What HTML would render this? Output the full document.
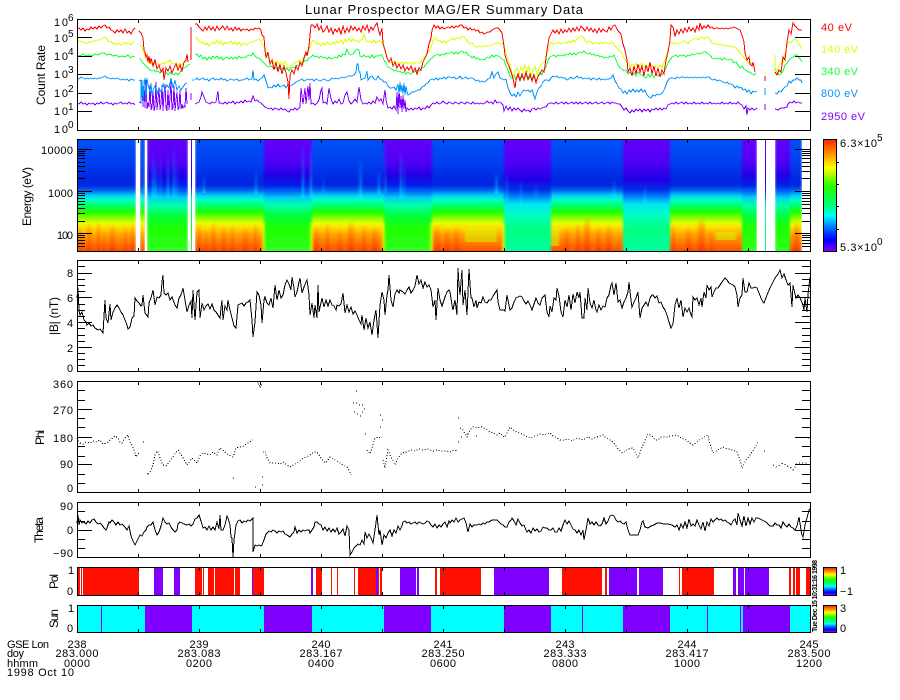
<!DOCTYPE html>
<html><head><meta charset="utf-8"><title>Lunar Prospector MAG/ER Summary Data</title>
<style>
html,body{margin:0;padding:0;background:#fff;width:900px;height:700px;overflow:hidden}
svg{display:block}
text{font-family:"Liberation Sans",sans-serif;fill:#000}
.c{shape-rendering:crispEdges;fill:none}
</style></head><body>
<svg width="900" height="700" viewBox="0 0 900 700" xmlns="http://www.w3.org/2000/svg">
<defs>
<filter id="bx" filterUnits="userSpaceOnUse" x="0" y="0" width="900" height="700" color-interpolation-filters="sRGB"><feGaussianBlur stdDeviation="1.1 0"/></filter>
<linearGradient id="d" gradientUnits="userSpaceOnUse" x1="0" y1="140" x2="0" y2="251">
<stop offset="0" stop-color="#0050f8"/><stop offset=".2" stop-color="#0040ee"/><stop offset=".34" stop-color="#0028e6"/><stop offset=".41" stop-color="#0028e0"/><stop offset=".46" stop-color="#0070f0"/><stop offset=".5" stop-color="#00d0f8"/><stop offset=".54" stop-color="#00ffc8"/><stop offset=".6" stop-color="#00ff5a"/><stop offset=".65" stop-color="#20ff00"/><stop offset=".7" stop-color="#80ff00"/><stop offset=".75" stop-color="#e6ff00"/><stop offset=".79" stop-color="#ffdc00"/><stop offset=".86" stop-color="#ffa000"/><stop offset="1" stop-color="#ff5000"/></linearGradient>
<linearGradient id="n" gradientUnits="userSpaceOnUse" x1="0" y1="140" x2="0" y2="251">
<stop offset="0" stop-color="#6400fa"/><stop offset=".2" stop-color="#5000f5"/><stop offset=".32" stop-color="#2000e4"/><stop offset=".41" stop-color="#0020e8"/><stop offset=".47" stop-color="#0070fa"/><stop offset=".52" stop-color="#00d0f0"/><stop offset=".59" stop-color="#00ffaa"/><stop offset=".68" stop-color="#00ff3c"/><stop offset=".8" stop-color="#1eff00"/><stop offset="1" stop-color="#30ff20"/></linearGradient>
<linearGradient id="m" gradientUnits="userSpaceOnUse" x1="0" y1="140" x2="0" y2="251">
<stop offset="0" stop-color="#6400fa"/><stop offset=".2" stop-color="#5000f5"/><stop offset=".36" stop-color="#2000e4"/><stop offset=".45" stop-color="#0030e8"/><stop offset=".52" stop-color="#0090fa"/><stop offset=".58" stop-color="#00e8f0"/><stop offset=".68" stop-color="#00ffc0"/><stop offset=".8" stop-color="#00ff80"/><stop offset="1" stop-color="#00ffa0"/></linearGradient>
<linearGradient id="r" x1="0" y1="0" x2="0" y2="1">
<stop offset="0" stop-color="#ff2800"/><stop offset=".13" stop-color="#ff9600"/><stop offset=".25" stop-color="#ffff00"/><stop offset=".42" stop-color="#1eff00"/><stop offset=".6" stop-color="#00ff82"/><stop offset=".68" stop-color="#00ffff"/><stop offset=".82" stop-color="#0050ff"/><stop offset=".9" stop-color="#0000ff"/><stop offset="1" stop-color="#8000ff"/></linearGradient>
<linearGradient id="s" x1="0" y1="0" x2="0" y2="1"><stop offset="0" stop-color="#00ffff" stop-opacity="0"/><stop offset=".55" stop-color="#00b0ff" stop-opacity=".45"/><stop offset="1" stop-color="#00ffff" stop-opacity=".8"/></linearGradient>
<linearGradient id="f" x1="0" y1="0" x2="0" y2="1"><stop offset="0" stop-color="#ff8000" stop-opacity="0"/><stop offset=".35" stop-color="#ff7000" stop-opacity=".5"/><stop offset="1" stop-color="#ff2000" stop-opacity=".55"/></linearGradient>
<path id="xt" d="M138.5 0v3M199.5 0v3M260.5 0v3M321.5 0v3M382.5 0v3M443.5 0v3M504.5 0v3M565.5 0v3M626.5 0v3M687.5 0v3M748.5 0v3"/>
<path id="xb" d="M138.5 0v-3M199.5 0v-3M260.5 0v-3M321.5 0v-3M382.5 0v-3M443.5 0v-3M504.5 0v-3M565.5 0v-3M626.5 0v-3M687.5 0v-3M748.5 0v-3"/>
</defs>

<text x="305" y="14" font-size="13" textLength="278" lengthAdjust="spacing">Lunar Prospector MAG/ER Summary Data</text>

<!-- panel 1 curves -->
<g class="c" stroke-width="1">
<path stroke="#8000ff" d="M77 103 79 104 81 102 83 104 85 103 87 105 89 103 91 104 93 103 95 105 97 103 99 104 101 102 103 104 105 103 107 102 109 104 111 103 113 105 115 103 117 104 119 103 121 102 123 104 125 103 127 104 129 102 131 104 133 103 135 105M139 102 141 103 142 82 143 107 144 84 145 108 146 80 147 109 148 104 149 107 150 85 151 110 152 108 153 90 154 111 155 106 156 82 157 110 158 100 159 88 160 110 161 104 162 85 163 111 164 94 165 84 166 108 167 111 168 90 169 110 170 98 171 82 172 110 173 107 174 86 175 111 176 100 177 92 178 110 179 107 180 90 181 109 182 105 183 108 184 106 185 107 186 88 187 104M191 93 191 100M195 104 197 103 199 102 201 97 202 92 204 97 206 102 208 103 210 104 212 102 214 103 216 102 218 91 219 103 221 103 223 104 225 102 227 104 229 102 231 103 233 101 235 104 237 102 239 103 241 101 243 103 245 100 247 102 249 101 251 102 253 96 255 101 257 100 259 102 261 103 263 105 265 107 267 108 269 109 271 108 273 110 275 108 277 109 279 110 281 108 283 110 285 109 287 111 289 112 291 109 293 110 295 108 297 110 299 108 300 107 301 88 302 96 303 104 305 88 306 104 308 86 309 100 310 83 311 104 313 103 315 105 317 103 319 100 321 90 322 88 323 103 325 102 327 104 329 88 331 99 333 104 335 101 337 103 339 99 341 104 343 103 345 95 347 92 349 101 351 104 353 102 355 99 357 102 359 87 361 100 363 104 365 103 367 104 369 102 371 104 373 101 375 103 377 97 379 101 381 99 383 104 385 90 386 100 388 108 390 107 392 109 394 106 396 110 397 92 398 114 399 88 400 108 401 96 402 112 403 95 404 109 405 100 406 112 407 108 409 110 411 108 413 110 415 108 417 109 419 107 421 110 423 108 425 109 427 106 429 108 431 105 433 103 435 104 437 102 439 104 441 103 443 101 445 103 447 104 449 102 451 103 453 104 455 102 457 103 459 104 461 102 463 103 465 104 467 102 469 103 471 104 473 102 475 104 477 103 479 104 481 103 483 104 485 103 487 101 489 103 491 102 493 104 495 100 497 103 499 102 501 103 503 105 504 111 506 106 508 110 510 107 512 111 514 108 516 110 518 108 520 110 522 112 524 109 526 111 528 110 530 112 532 109 534 108 536 110 538 108 540 109 542 108 544 107 546 107 548 104 550 103 552 103 554 104 556 102 558 104 560 103 562 102 564 104 566 102 568 104 570 103 572 102 574 104 576 102 578 104 580 102 582 104 584 103 586 102 588 104 590 102 592 104 594 103 596 102 598 104 600 103 602 102 604 104 606 103 608 102 610 104 612 102 614 103 616 103 618 104 620 104 622 107 624 110 626 108 628 111 630 113 632 110 634 112 636 109 638 111 640 109 642 112 644 109 646 111 648 109 650 112 652 109 654 110 656 108 658 110 660 108 662 110 664 108 666 109 668 105 670 104 672 103 674 104 676 102 678 104 680 103 682 102 684 104 686 102 688 104 690 103 692 104 694 102 696 104 698 103 700 104 702 102 704 104 706 103 708 104 710 102 712 104 714 103 716 104 718 103 720 104 722 102 724 104 726 103 728 104 730 102 732 104 734 103 736 104 738 102 740 104 742 105 744 109 746 106 747 115 748 108 750 110 752 108 754 110 756 109 757 108M765 104 765 110M775 109 778 110 781 108 784 108 787 107 788 104 790 102 792 103 794 101 796 103 798 102 800 103 802 103"/>
<path stroke="#0096ff" d="M77 78 79 79 81 77 83 78 85 79 87 78 89 79 91 78 93 79 95 78 97 79 99 78 101 78 103 77 105 76 107 78 109 78 111 79 113 78 115 79 117 78 119 79 121 80 123 79 125 80 127 79 129 81 131 79 133 80 135 80M139 81 141 80 141 102 142 80 143 102 144 81 145 79 146 100 147 78 148 85 149 88 150 92 151 83 152 96 153 90 155 86 157 94 159 88 161 92 163 84 165 90 167 85 169 88 171 78 173 88 175 80 177 90 179 86 181 90 183 87 185 84 187 83M192 80 194 80M195 80 197 78 199 80 201 79 203 78 205 80 207 79 209 81 211 79 213 78 215 80 217 79 219 80 221 78 223 80 225 79 227 81 229 80 231 79 233 80 235 80 237 79 239 81 241 80 243 80 245 79 247 78 249 80 251 79 252 79 253 70 254 80 256 79 258 81 260 79 262 78 264 75 265 78 267 84 268 88 270 87 272 88 274 85 276 87 278 84 280 87 282 86 284 85 286 88 288 84 290 86 292 85 294 84 296 82 298 81 300 80 302 79 304 81 306 80 308 79 310 80 312 79 314 81 316 79 318 80 320 81 322 80 324 79 326 80 328 81 330 80 332 78 334 79 336 78 338 79 340 78 342 77 344 78 346 77 348 76 350 76 352 76 354 75 356 72 357 64 358 64 359 72 360 72 361 80 363 79 365 78 367 71 368 80 370 77 372 76 374 79 376 80 378 76 380 79 382 80 384 82 386 82 388 86 390 88 392 88 394 87 396 90 398 84 399 94 400 82 401 92 402 85 403 94 404 83 405 95 406 86 407 92 408 95 410 94 412 92 414 92 416 91 418 90 420 90 422 87 424 86 426 84 428 83 430 80 432 79 434 80 436 78 438 80 440 78 442 79 444 77 446 79 448 77 450 77 452 78 454 77 456 79 458 78 460 76 462 79 464 78 466 77 468 79 470 78 472 78 474 79 476 81 478 80 480 82 482 81 484 82 486 81 488 79 490 78 492 72 494 78 496 74 498 72 500 78 502 79 504 80 506 79 508 88 509 90 510 93 512 96 514 94 516 97 518 92 520 96 522 92 524 90 526 91 528 90 530 92 532 90 534 96 535 99 537 92 539 88 541 86 543 82 545 80 547 80 549 81 551 78 553 76 555 77 557 76 559 78 561 77 563 78 565 78 567 80 569 79 571 77 573 79 575 78 577 76 579 78 581 77 583 79 585 78 587 79 589 78 591 80 593 78 595 79 597 80 599 78 601 80 603 79 605 80 607 79 609 79 611 78 613 75 615 81 617 84 619 88 621 89 623 93 625 91 627 94 629 90 631 92 633 89 635 92 637 90 639 92 641 89 643 92 645 90 647 95 649 97 651 98 653 95 655 96 657 94 659 95 661 94 663 92 665 88 667 82 669 79 671 78 673 78 675 79 677 77 679 78 681 77 683 77 685 78 687 77 689 78 691 77 693 78 695 77 697 78 699 77 701 78 703 77 705 78 707 77 709 77 711 79 713 80 715 79 717 81 719 80 721 81 723 82 725 83 727 82 729 84 731 84 733 85 735 88 737 86 739 88 741 87 743 90 745 89 747 92 749 90 751 94 753 91 755 92 757 91M765 88 765 95M775 93 777 94 779 91 781 92 783 89 785 87 787 86 789 81 791 83 793 80 795 80 797 78 799 80 801 80 802 83"/>
<path stroke="#14ff3c" d="M77 55 80 56 83 54 86 56 89 55 92 56 95 54 98 55 101 53 104 53 107 55 110 54 113 56 116 55 119 57 122 56 125 57 128 55 131 58 133 56 135 57M140 58 142 62 144 64 146 66 148 68 150 70 152 71 154 70 156 72 158 71 160 73 162 71 164 74 166 72 168 75 170 72 172 74 174 75 176 73 178 75 180 72 182 69 184 68 186 67 188 65 190 64M195 55 197 54 199 57 201 55 203 59 205 57 207 60 209 57 211 59 213 56 215 58 217 56 219 59 221 57 223 60 225 58 227 57 229 59 231 57 233 59 235 57 237 59 239 56 241 58 243 57 245 58 247 56 249 55 251 56 253 53 255 56 257 58 259 58 261 60 263 62 265 64 267 66 269 67 271 66 273 68 275 67 277 69 279 67 281 70 283 68 285 70 287 68 289 71 291 68 293 67 295 68 297 65 299 66 301 63 303 63 305 60 307 61 309 58 311 57 313 55 315 57 317 56 319 58 321 56 323 58 325 57 327 59 329 57 331 59 333 58 335 57 337 58 339 55 341 57 343 54 345 55 347 49 349 54 351 55 353 54 355 51 357 49 359 50 360 56 362 57 364 55 366 57 368 56 370 58 372 55 374 58 376 56 378 56 380 55 382 55 384 60 386 63 388 67 390 68 392 69 394 71 396 70 398 72 400 71 402 73 404 72 406 74 408 72 410 74 412 73 414 72 416 71 418 70 420 71 422 68 424 67 426 64 428 62 430 60 432 58 434 56 436 55 438 54 440 56 442 54 444 55 446 53 448 54 450 53 452 52 454 54 456 52 458 54 460 52 462 51 464 53 466 52 468 55 470 56 472 58 474 56 476 59 478 58 480 60 482 59 484 60 486 58 488 57 490 58 492 55 494 57 496 55 498 56 500 57 502 59 504 60 506 66 508 70 510 76 512 78 514 74 516 80 518 75 520 81 522 76 524 78 526 75 528 80 530 77 532 79 534 74 536 81 538 76 540 72 542 75 544 70 546 67 548 60 550 57 552 56 554 55 556 57 558 55 560 56 562 55 564 56 566 54 568 55 570 53 572 55 574 53 576 55 578 53 580 52 582 53 584 51 586 53 588 54 590 53 592 55 594 54 596 56 598 55 600 57 602 56 604 58 606 57 608 58 610 56 612 57 614 55 616 60 618 65 620 68 622 69 624 71 626 70 628 74 630 72 632 75 634 73 636 76 638 72 640 74 642 75 644 77 646 78 648 74 650 77 652 74 654 78 656 74 658 76 660 74 662 75 664 72 666 68 668 63 670 60 672 57 674 56 676 55 678 57 680 55 682 56 684 55 686 57 688 55 690 56 692 54 694 55 696 54 698 53 700 54 702 53 704 52 706 52 708 54 710 55 712 58 714 59 716 58 718 59 720 58 722 60 724 58 726 59 728 60 730 59 732 60 734 63 736 62 738 65 740 68 742 66 744 69 746 70 748 72 750 72 752 74 754 75 756 73M765 71 765 73M775 68 777 72 779 75 781 74 783 71 785 65 787 63 789 60 791 58 793 57 795 55 797 55 799 58 801 60 802 62"/>
<path stroke="#dcff00" d="M77 39 79 42 81 41 83 43 85 42 87 44 89 42 91 42 93 41 95 41 97 40 99 40 101 39 103 38 105 37 107 39 109 42 111 41 113 44 115 43 117 45 119 43 121 45 123 44 125 42 127 44 129 43 131 45 133 42 135 41M140 45 142 47 144 53 146 58 148 63 150 62 152 64 154 63 156 65 158 63 160 65 162 63 164 64 166 62 168 62 170 60 172 63 174 64 176 63 178 66 180 63 182 65 184 63 186 62 187 61M195 38 197 38 199 41 201 43 203 42 205 45 207 43 209 46 211 44 213 42 215 44 217 40 219 44 221 41 223 45 225 42 227 44 229 42 231 41 233 44 235 42 237 45 239 42 241 46 243 43 245 44 247 45 249 43 251 42 253 42 255 41 257 40 259 39 261 41 263 46 265 50 267 55 269 60 271 62 273 61 275 64 277 61 279 64 281 62 283 65 285 61 287 66 289 68 291 66 293 64 295 62 297 62 299 60 301 62 303 58 305 56 307 55 309 50 311 44 313 40 315 42 317 44 319 43 321 46 323 43 325 45 327 42 329 44 331 45 333 42 335 44 337 41 339 43 341 40 343 44 345 39 347 42 349 38 351 42 353 39 355 41 357 40 359 42 361 40 363 38 364 34 366 41 368 42 370 41 372 43 374 40 376 43 378 41 380 41 382 42 384 48 386 54 388 60 390 62 392 63 394 61 396 64 398 62 400 64 402 62 404 64 406 62 408 64 410 63 412 62 414 64 416 62 418 63 420 63 422 60 424 58 426 55 428 52 430 50 432 44 434 38 436 38 438 41 440 40 442 43 444 41 446 43 448 41 450 40 452 38 454 40 456 38 458 38 460 39 462 36 464 37 466 39 468 42 470 44 472 43 474 46 476 47 478 47 480 46 482 47 484 46 486 46 488 46 490 45 492 45 494 44 496 43 498 43 500 44 502 43 504 46 506 52 507 57 509 62 511 70 513 76 515 72 517 68 519 74 521 67 523 71 525 65 527 72 529 66 531 76 533 70 535 66 537 75 539 68 541 65 543 63 545 62 547 54 549 46 551 42 553 44 555 43 557 44 559 42 561 44 563 43 565 42 567 43 569 41 571 43 573 40 575 42 577 39 579 37 581 36 583 37 585 40 587 43 589 41 591 42 593 44 595 42 597 43 599 44 601 42 603 44 605 42 607 43 609 44 611 42 613 43 615 46 617 48 619 50 621 52 623 57 625 59 627 62 629 64 630 67 632 64 634 66 636 63 638 68 640 65 642 63 644 67 646 65 648 68 650 66 652 65 654 68 656 66 658 68 660 65 662 68 664 62 666 57 668 50 670 43 672 42 674 44 676 43 678 44 680 43 682 42 684 41 686 42 688 44 690 41 692 40 694 39 696 38 698 40 700 38 702 37 704 39 706 37 708 37 710 40 712 43 714 44 716 43 718 45 720 44 722 45 724 46 726 45 728 46 730 46 732 47 734 47 736 48 738 50 740 53 742 55 744 58 746 60 748 62 750 64 752 63 754 65 756 64M765 71 765 74M775 55 775 72M775 70 777 71 779 66 781 62 783 63 785 54 787 46 789 42 791 43 793 40 795 39 797 40 799 44 801 47 802 49"/>
<path stroke="#ff0000" d="M77 29 79 28 81 30 83 28 85 31 87 29 89 30 91 27 93 29 95 27 97 29 99 26 101 28 103 26 105 25 107 28 109 27 111 30 113 31 115 33 117 30 119 32 121 30 123 33 125 29 127 33 129 31 131 34 133 30 135 28M139 31 141 33 143 38 144 50 145 52 146 57 147 55 148 62 149 56 150 64 151 58 153 66 155 60 157 69 159 65 161 72 163 68 164 80 166 68 168 71 170 66 172 73 174 68 176 64 178 70 180 65 182 71 184 62 186 60 187 54 188 62M191 60 191 27M195 24 197 24 199 27 201 29 203 31 205 27 207 30 209 26 211 30 213 27 215 31 217 26 219 30 221 28 223 26 225 30 227 26 229 30 231 28 233 31 235 27 237 30 239 28 241 31 243 29 245 30 247 29 249 31 251 29 253 30 255 28 257 29 259 28 261 30 262 35 264 37 265 50 266 58 268 52 270 64 272 60 274 70 276 62 278 72 280 64 282 74 284 66 286 73 288 82 289 99 290 75 292 70 294 74 296 66 298 70 300 62 302 66 304 58 306 52 307 56 309 46 311 25 313 25 315 28 317 24 319 30 321 26 323 32 325 30 327 26 329 32 331 28 333 34 335 29 337 32 339 28 341 34 343 26 345 33 347 28 349 32 351 26 353 30 355 27 357 31 359 28 361 32 363 26 365 30 367 25 369 32 371 27 373 30 375 26 377 23 379 32 380 35 382 28 383 43 385 50 387 58 389 62 391 58 393 66 395 62 397 68 399 64 401 69 403 65 405 71 407 67 409 70 411 66 413 72 415 68 417 74 419 68 421 70 423 62 425 58 427 54 429 44 431 38 432 30 434 25 436 28 438 26 440 29 442 27 444 29 446 28 448 27 450 28 452 26 454 28 456 26 458 27 460 25 462 25 464 28 466 27 468 30 470 28 472 30 474 29 476 31 478 30 480 33 482 32 484 34 486 33 488 32 490 32 492 30 494 29 496 28 498 28 500 30 502 33 504 46 505 55 507 62 509 66 511 72 513 78 515 88 516 80 518 74 520 80 522 74 524 80 526 72 528 79 530 74 532 81 534 75 536 83 538 76 540 74 542 70 544 72 545 66 547 50 549 38 551 34 553 30 555 33 557 30 559 34 561 29 563 33 565 30 567 32 569 28 571 32 573 28 575 31 577 27 579 31 581 26 583 28 585 31 587 27 589 31 591 28 593 32 595 29 597 33 599 28 601 32 603 29 605 31 607 32 609 27 611 30 613 26 615 25 617 29 619 32 621 34 623 44 625 50 627 60 628 72 630 68 632 76 634 66 636 74 638 64 640 72 642 66 644 76 646 65 648 72 650 62 652 74 654 66 656 76 658 68 660 77 662 70 664 74 666 60 668 52 670 40 671 25 673 27 675 36 677 30 679 34 681 29 683 33 685 28 687 32 689 27 691 31 693 28 695 32 697 26 699 30 700 23 702 29 704 26 706 28 708 25 710 28 712 27 714 29 716 28 718 28 720 29 722 28 724 29 726 28 728 29 730 28 732 28 734 27 736 28 738 29 740 30 742 35 744 42 745 53 747 60 749 57 750 64 752 66 753 62 755 72M765 76 765 81M775 72 777 75 779 70 781 72 783 57 785 60 787 42 789 30 791 34 793 23 795 26 797 28 799 30 802 30"/>
</g>

<!-- spectrogram -->
<g shape-rendering="crispEdges">
<g filter="url(#bx)">
<rect x="74" y="140" width="62" height="111" fill="url(#d)"/>
<rect x="140" y="140" width="5" height="111" fill="url(#d)"/>
<rect x="147" y="140" width="41" height="111" fill="url(#n)"/>
<rect x="195" y="140" width="69" height="111" fill="url(#d)"/>
<rect x="264" y="140" width="48" height="111" fill="url(#n)"/>
<rect x="312" y="140" width="72" height="111" fill="url(#d)"/>
<rect x="384" y="140" width="48" height="111" fill="url(#n)"/>
<rect x="432" y="140" width="72" height="111" fill="url(#d)"/>
<rect x="504" y="140" width="47" height="111" fill="url(#m)"/>
<rect x="551" y="140" width="72" height="111" fill="url(#d)"/>
<rect x="623" y="140" width="47" height="111" fill="url(#m)"/>
<rect x="670" y="140" width="72" height="111" fill="url(#d)"/>
<rect x="742" y="140" width="15" height="111" fill="url(#n)"/>
<rect x="775" y="140" width="15" height="111" fill="url(#n)"/>
<rect x="790" y="140" width="12" height="111" fill="url(#d)"/>
<!-- spikes in blue zone -->
<g fill="url(#s)">
<rect x="152" y="150" width="2" height="48"/><rect x="155" y="160" width="2" height="38"/><rect x="160" y="150" width="1" height="48"/><rect x="167" y="155" width="2" height="43"/><rect x="173" y="146" width="2" height="52"/><rect x="177" y="160" width="1" height="38"/>
<rect x="143" y="142" width="1" height="50"/><rect x="203" y="175" width="2" height="18"/><rect x="255" y="170" width="2" height="24"/><rect x="302" y="142" width="2" height="56"/><rect x="310" y="142" width="2" height="56"/>
<rect x="323" y="175" width="1" height="18"/><rect x="359" y="160" width="3" height="40"/><rect x="378" y="170" width="2" height="24"/><rect x="385" y="142" width="1" height="52"/><rect x="400" y="150" width="2" height="48"/><rect x="404" y="160" width="1" height="38"/>
<rect x="495" y="172" width="3" height="22"/><rect x="506" y="172" width="2" height="30"/><rect x="520" y="180" width="2" height="26"/><rect x="535" y="183" width="2" height="26"/><rect x="613" y="180" width="2" height="16"/><rect x="644" y="186" width="2" height="16"/>
</g>
<!-- bottom texture day -->
<g fill="url(#f)">
<rect x="79" y="226" width="3" height="25"/><rect x="87" y="222" width="4" height="29"/><rect x="97" y="220" width="3" height="31"/><rect x="103" y="228" width="2" height="23"/><rect x="110" y="224" width="5" height="27"/><rect x="124" y="226" width="3" height="25"/><rect x="131" y="222" width="3" height="29"/>
<rect x="197" y="222" width="4" height="29"/><rect x="205" y="228" width="2" height="23"/><rect x="212" y="220" width="3" height="31"/><rect x="222" y="226" width="4" height="25"/><rect x="231" y="224" width="3" height="27"/><rect x="243" y="226" width="5" height="25"/><rect x="254" y="222" width="3" height="29"/>
<rect x="314" y="226" width="5" height="25"/><rect x="326" y="222" width="3" height="29"/><rect x="338" y="228" width="4" height="23"/><rect x="348" y="220" width="6" height="31"/><rect x="362" y="224" width="4" height="27"/><rect x="372" y="226" width="5" height="25"/>
<rect x="434" y="224" width="6" height="27"/><rect x="444" y="228" width="6" height="23"/><rect x="454" y="226" width="5" height="25"/><rect x="564" y="226" width="5" height="25"/><rect x="576" y="222" width="4" height="29"/><rect x="584" y="216" width="6" height="35"/><rect x="596" y="226" width="5" height="25"/><rect x="606" y="224" width="5" height="27"/><rect x="672" y="222" width="3" height="29"/><rect x="686" y="226" width="5" height="25"/><rect x="698" y="216" width="7" height="35"/><rect x="710" y="228" width="3" height="23"/><rect x="794" y="220" width="5" height="31"/>
</g>
<g fill="#d4ff00" opacity=".5">
<rect x="465" y="228" width="32" height="14"/><rect x="551" y="228" width="8" height="18"/><rect x="716" y="232" width="20" height="8"/>
</g>
<g fill="#e8ff00" opacity=".7"><rect x="262" y="222" width="3" height="29"/><rect x="310" y="222" width="3" height="29"/><rect x="382" y="222" width="3" height="29"/><rect x="430" y="222" width="3" height="29"/><rect x="502" y="225" width="3" height="26"/></g>
</g>
<!-- clean gaps after blur -->
<g fill="#fff">
<rect x="70" y="139" width="7" height="113"/><rect x="136" y="140" width="4" height="111"/><rect x="145" y="140" width="2" height="111"/><rect x="188" y="140" width="7" height="111"/><rect x="757" y="140" width="18" height="111"/><rect x="802" y="140" width="8" height="111"/>
</g>
<rect x="191" y="140" width="1" height="111" fill="url(#n)"/>
<rect x="765" y="140" width="1" height="111" fill="url(#m)"/>
<!-- top line -->
<path class="c" stroke="#0064ff" d="M77 139.5H136M140 139.5H145M147 139.5H188M195 139.5H757M775 139.5H802"/>
</g>

<!-- frames -->
<g class="c" stroke="#000">
<path d="M77.5 19.5H810.5V130.5H77.5Z"/>
<path d="M77.5 139.5H810.5V251.5H77.5Z"/>
<path d="M77.5 260.5H810.5V371.5H77.5Z"/>
<path d="M77.5 381.5H810.5V492.5H77.5Z"/>
<path d="M77.5 502.5H810.5V557.5H77.5Z"/>
<path d="M77.5 567.5H810.5V595.5H77.5Z"/>
<path d="M77.5 605.5H810.5V632.5H77.5Z"/>
<use href="#xt" y="20"/><use href="#xb" y="130"/>
<use href="#xt" y="140"/><use href="#xb" y="251"/>
<use href="#xt" y="261"/><use href="#xb" y="371"/>
<use href="#xt" y="382"/><use href="#xb" y="492"/>
<use href="#xt" y="503"/><use href="#xb" y="557"/>
<!-- panel1 -->
<path d="M77 37.5H92M77 56.5H92M77 74.5H92M77 93.5H92M77 111.5H92M795 37.5H810M795 56.5H810M795 74.5H810M795 93.5H810M795 111.5H810"/>
<!-- panel2 -->
<path d="M77 149.5H92M77 191.5H92M77 233.5H92M795 149.5H810M795 191.5H810M795 233.5H810"/>
<path d="M77 151.5H85M77 153.5H85M77 155.5H85M77 158.5H85M77 162.5H85M77 166.5H85M77 171.5H85M77 178.5H85M77 193.5H85M77 195.5H85M77 198.5H85M77 201.5H85M77 204.5H85M77 208.5H85M77 213.5H85M77 221.5H85M77 235.5H85M77 237.5H85M77 240.5H85M77 243.5H85M77 246.5H85M802 151.5H810M802 153.5H810M802 155.5H810M802 158.5H810M802 162.5H810M802 166.5H810M802 171.5H810M802 178.5H810M802 193.5H810M802 195.5H810M802 198.5H810M802 201.5H810M802 204.5H810M802 208.5H810M802 213.5H810M802 221.5H810M802 235.5H810M802 237.5H810M802 240.5H810M802 243.5H810M802 246.5H810"/>
<!-- panel3 -->
<path d="M77 273.5H92M77 297.5H92M77 322.5H92M77 347.5H92M795 273.5H810M795 297.5H810M795 322.5H810M795 347.5H810"/>
<path d="M77 266.5H85M77 279.5H85M77 285.5H85M77 291.5H85M77 304.5H85M77 310.5H85M77 316.5H85M77 328.5H85M77 335.5H85M77 341.5H85M77 353.5H85M77 359.5H85M77 365.5H85M802 266.5H810M802 279.5H810M802 285.5H810M802 291.5H810M802 304.5H810M802 310.5H810M802 316.5H810M802 328.5H810M802 335.5H810M802 341.5H810M802 353.5H810M802 359.5H810M802 365.5H810"/>
<!-- panel4 -->
<path d="M77 409.5H92M77 437.5H92M77 464.5H92M795 409.5H810M795 437.5H810M795 464.5H810"/>
<path d="M77 390.5H85M77 400.5H85M77 418.5H85M77 427.5H85M77 446.5H85M77 456.5H85M77 474.5H85M77 483.5H85M802 390.5H810M802 400.5H810M802 418.5H810M802 427.5H810M802 446.5H810M802 456.5H810M802 474.5H810M802 483.5H810"/>
<!-- panel5 -->
<path d="M77 530.5H92M795 530.5H810M77 511.5H85M77 521.5H85M77 539.5H85M77 548.5H85M802 511.5H810M802 521.5H810M802 539.5H810M802 548.5H810"/>
</g>

<!-- |B| -->
<path class="c" stroke="#000" d="M77 298 78 288 79 310 80 315 82 312 84 320 86 322 87 325 89 323 91 326 93 325 95 328 98 330 100 329 103 333 105 300 106 318 108 323 110 304 111 320 113 312 115 308 117 305 119 308 121 312 123 315 125 320 127 325 128 329 130 327 132 318 134 316 135 298 137 301 139 303 141 306 142 305 143 295 145 313 148 317 149 303 151 298 153 290 155 305 157 297 159 298 161 295 162 282 163 275 164 293 166 295 168 293 170 300 172 297 175 305 177 308 179 298 181 295 183 288 185 300 187 312 189 305 191 301 192 318 193 290 195 320 197 292 199 290 200 318 202 303 204 310 206 306 208 304 210 309 212 304 214 310 216 312 218 315 220 318 221 308 222 300 223 320 225 306 227 310 228 300 230 310 232 318 234 326 236 328 238 305 240 304 242 303 244 306 246 303 248 302 250 300 252 320 253 337 255 322 257 292 259 295 261 305 262 323 264 300 265 297 267 303 269 305 271 298 273 308 275 285 277 300 279 290 281 298 283 295 285 285 287 280 289 284 291 290 292 277 294 288 295 297 297 292 299 282 300 278 302 293 304 287 306 282 307 280 309 295 310 315 312 303 314 318 315 305 317 318 318 285 319 312 320 307 322 298 324 307 326 300 328 306 330 300 332 305 334 306 336 310 337 305 339 306 341 304 343 293 345 313 347 305 349 312 351 307 353 314 355 311 357 315 359 320 361 324 362 315 364 330 366 318 368 328 370 322 372 335 374 320 376 310 378 338 380 305 382 292 384 300 385 315 387 295 388 290 389 275 391 300 393 307 395 294 397 290 399 293 400 290 403 292 405 294 407 290 409 287 411 293 413 290 415 286 417 275 419 284 421 280 423 288 425 282 427 287 429 285 431 290 433 307 435 300 436 320 438 288 440 300 442 306 443 303 445 297 447 292 449 290 450 292 452 305 453 310 455 300 457 315 458 268 459 285 460 295 462 270 463 305 465 290 467 315 469 269 471 298 472 298 474 307 476 300 477 308 479 302 481 303 483 297 485 302 487 303 489 300 491 300 493 296 495 293 497 290 498 302 500 310 502 310 504 310 505 311 507 295 508 300 510 310 512 308 514 302 516 298 518 297 520 296 522 297 524 301 526 304 528 301 530 305 532 310 534 304 536 298 538 303 540 305 542 298 544 296 545 295 547 312 549 317 550 306 552 312 554 298 556 300 557 288 559 296 561 312 563 317 565 300 567 307 569 295 571 310 573 294 575 303 577 292 579 298 580 292 582 318 584 318 585 298 587 310 588 288 590 303 592 308 594 300 596 310 597 312 599 305 601 310 603 306 605 307 607 298 609 295 611 285 612 283 614 295 616 283 618 302 620 300 622 308 624 302 626 298 628 292 629 282 631 300 632 307 634 302 636 298 638 292 640 318 642 308 644 305 646 302 648 306 650 298 652 295 653 295 655 298 657 296 659 303 661 302 663 307 665 310 667 315 669 322 671 328 673 324 675 305 677 298 679 308 681 300 683 317 685 308 687 312 689 308 691 315 692 317 693 297 695 300 697 298 699 305 701 298 702 307 704 292 706 298 707 285 709 290 711 287 712 297 714 292 716 288 718 288 720 285 722 282 725 278 727 280 729 283 731 284 733 285 735 287 737 295 738 307 740 298 742 295 743 278 745 292 747 292 749 283 751 288 753 288 755 287 757 288 759 293 761 298 763 302 764 303 767 295 770 288 773 282 775 278 778 274 780 270 782 278 784 274 786 280 788 285 790 283 792 307 793 285 794 290 796 298 798 295 800 298 803 305 804 310 805 298 807 312 808 295 810 277"/>

<!-- Phi dotted -->
<g class="c" stroke="#000">
<path stroke-dasharray="1 1.9" d="M77 438 80 443 83 444 86 442 90 443 93 441 97 442 100 440 103 444 107 443 110 440 113 438 115 436 118 438 120 442 122 443 125 438 128 435 130 442 132 445 134 450 136 457 138 454 140 452M143 442 145 442M148 474 150 472 153 465 155 455 157 451 158 452 160 458 163 465 166 466 170 461 174 455 178 450 182 456 187 465 190 461 192 458 195 461 197 463 200 456 203 453 207 454 210 455 213 452 217 455 220 448 224 451 227 454 233 457 236 448 239 447 242 447 246 444 250 442 253 440"/>
<path stroke-dasharray="1 1.9" d="M263 452 265 451 267 458 270 463 275 463 280 464 283 462 287 465 290 467 293 465 297 463 302 459 306 457 310 455 314 452 317 452 321 458 325 463 328 460 330 457 335 460 340 463 343 465 347 467 349 470 351 475"/>
<path stroke-dasharray="1 1.9" d="M367 450 370 454 372 448 375 438 378 437 382 438M383 460 385 468 388 450 390 455 395 465 398 458 402 453 407 452 411 450 415 451 419 449 423 450 428 449 433 451 437 450 441 451 445 451 450 452 454 450 457 451"/>
<path stroke-dasharray="1 1.9" d="M460 428 463 430 467 437 470 430 473 427 477 428 482 427 486 429 490 432 493 433 497 435 500 433 503 436 505 437 508 431 510 427 513 430 517 432 522 434 526 436 530 438 535 436 540 434 545 435 550 433 553 436 557 438 560 440 563 440 568 439 572 441 577 438 583 440 588 437 592 439 597 437 603 435 606 438 610 440 613 442 616 446 620 451 623 453 628 449 633 448 636 454 638 458 642 447 645 440 648 434 652 436 655 440 658 440 661 437 666 437 671 436 677 435 681 438 686 440 690 443 693 445 698 441 703 438 708 435 710 444 713 453 718 450 723 447 728 449 733 450 737 452 740 460 742 468 746 460 750 455 754 449 758 442"/>
<path stroke-dasharray="1 2.4" d="M773 465 776 467 780 465 783 463 787 466 790 467 793 470 795 467 797 463 802 463 808 463"/>
<path d="M147 474h1M233 478h1M257 382h1M258 384h1M259 386h1M260 387h1M261 385h1M255 487h1M262 485h1M262 477h1M356 391h1M353 403h1M356 403h1M359 405h1M362 405h1M364 409h1M354 412h1M357 414h1M360 416h1M362 412h1M365 434h1M380 415h1M382 420h1M380 427h1M764 451h1M808 438h1M458 418h1M458 442h1M461 437h1M467 434h1M476 436h1"/>
</g>

<!-- Theta -->
<path class="c" stroke="#000" d="M77 523 78 515 79 525 80 520 82 523 84 522 86 524 88 521 90 523 92 520 94 519 96 522 98 524 100 523 102 525 104 528 106 530 107 528 109 522 110 523 112 520 114 522 116 525 118 522 120 525 122 524 125 527 127 530 129 526 131 536 133 541 135 545 137 541 139 537 140 535 142 536 144 532 146 530 147 527 149 525 151 525 153 522 155 530 157 535 159 532 161 526 163 518 165 522 167 524 169 523 171 527 173 530 175 532 177 530 178 524 180 522 182 523 184 524 187 525 189 524 191 526 193 524 195 519 197 518 199 515 201 521 203 528 205 527 207 530 209 526 211 530 213 527 215 530 217 522 219 529 220 515 221 530 223 530 225 525 227 516 228 518 230 525 231 537 232 538 233 557 234 540 236 525 238 521 240 520 242 523 244 521 246 522 248 520 250 521 252 519 253 518 253 552 255 545 257 546 259 545 261 546 262 545 264 540 266 534 267 533 269 531 271 532 273 530 275 531 277 533 279 531 281 532 283 531 285 534 287 535 290 537 292 534 294 532 295 527 297 533 299 530 301 532 303 530 305 531 307 530 309 530 310 533 312 530 314 527 315 522 317 522 319 524 321 525 323 530 325 527 327 531 329 528 331 532 333 529 335 532 337 528 339 534 341 532 343 529 345 536 347 526 349 530 350 555 352 552 354 548 356 546 358 544 360 545 362 540 364 544 365 532 367 538 369 534 371 538 373 543 375 530 377 515 379 535 380 530 382 545 384 535 386 538 388 533 390 530 392 536 394 530 396 533 398 526 400 530 402 526 403 522 405 521 407 523 409 522 411 524 413 523 415 522 417 524 419 522 421 523 423 524 425 523 427 521 429 522 431 525 433 527 435 524 437 528 439 525 441 527 443 524 445 522 447 527 449 521 450 523 452 520 454 522 456 518 458 522 460 520 462 519 464 518 466 523 468 532 470 524 472 527 474 525 477 525 479 524 481 525 483 523 485 524 487 522 489 522 492 520 495 520 497 520 499 522 501 524 503 525 505 527 507 527 509 522 511 520 512 518 514 521 516 525 518 519 520 523 522 526 524 525 526 530 527 532 529 530 531 533 533 528 535 531 537 529 539 532 541 531 543 527 545 528 547 528 549 530 551 530 553 528 555 532 557 532 559 528 561 531 563 525 565 520 567 524 569 521 571 525 573 529 575 530 577 533 579 530 581 535 583 530 584 540 586 530 588 518 590 524 592 522 594 525 596 522 598 525 600 526 602 524 604 518 606 524 608 521 610 516 612 515 614 516 616 520 618 522 620 521 622 523 624 524 626 522 628 530 630 535 633 535 636 535 638 535 640 530 642 522 643 521 645 527 648 528 651 526 654 525 657 523 660 523 664 524 668 524 672 525 675 527 677 525 679 530 681 524 683 528 685 522 687 528 689 519 691 526 693 524 695 526 697 520 699 525 701 529 703 522 705 531 707 522 709 526 711 519 713 522 715 520 717 518 719 520 721 519 723 521 725 520 727 522 729 523 731 525 733 521 735 519 737 525 738 513 740 520 742 526 744 516 746 526 748 518 750 524 752 518 754 522 756 518 758 518 762 520 766 522 770 526 773 526 775 523 777 525 779 525 781 528 783 522 785 525 787 527 789 524 791 527 793 528 795 530 797 526 799 517 801 530 802 535 803 537 805 525 807 518 809 510 810 509"/>

<!-- Pol -->
<g shape-rendering="crispEdges">
<g fill="#ff0f00">
<rect x="78" y="568" width="2" height="27"/><rect x="81" y="568" width="1" height="27"/><rect x="83" y="568" width="56" height="27"/><rect x="195" y="568" width="7" height="27"/><rect x="203" y="568" width="1" height="27"/><rect x="208" y="568" width="6" height="27"/><rect x="215" y="568" width="19" height="27"/><rect x="235" y="568" width="5" height="27"/><rect x="253" y="568" width="11" height="27"/><rect x="316" y="568" width="2" height="27"/><rect x="318" y="568" width="4" height="27"/><rect x="331" y="568" width="1" height="27"/><rect x="337" y="568" width="1" height="27"/><rect x="354" y="568" width="1" height="27"/><rect x="358" y="568" width="18" height="27"/><rect x="378" y="568" width="1" height="27"/><rect x="380" y="568" width="2" height="27"/><rect x="435" y="568" width="2" height="27"/><rect x="440" y="568" width="41" height="27"/><rect x="562" y="568" width="40" height="27"/><rect x="605" y="568" width="2" height="27"/><rect x="679" y="568" width="1" height="27"/><rect x="682" y="568" width="32" height="27"/><rect x="789" y="568" width="2" height="27"/><rect x="793" y="568" width="2" height="27"/><rect x="796" y="568" width="4" height="27"/><rect x="806" y="568" width="4" height="27"/>
</g>
<g fill="#8000ff">
<rect x="154" y="568" width="9" height="27"/><rect x="174" y="568" width="6" height="27"/><rect x="252" y="568" width="1" height="27"/><rect x="311" y="568" width="2" height="27"/><rect x="376" y="568" width="2" height="27"/><rect x="400" y="568" width="16" height="27"/><rect x="417" y="568" width="2" height="27"/><rect x="494" y="568" width="55" height="27"/><rect x="609" y="568" width="28" height="27"/><rect x="639" y="568" width="24" height="27"/><rect x="733" y="568" width="3" height="27"/><rect x="738" y="568" width="6" height="27"/><rect x="745" y="568" width="24" height="27"/>
</g>
<!-- Sun -->
<rect x="78" y="606" width="732" height="26" fill="#00ffff"/>
<g fill="#8000ff">
<rect x="145" y="606" width="47" height="26"/><rect x="264" y="606" width="48" height="26"/><rect x="384" y="606" width="47" height="26"/><rect x="504" y="606" width="47" height="26"/><rect x="623" y="606" width="47" height="26"/><rect x="743" y="606" width="47" height="26"/><rect x="101" y="606" width="1" height="26"/><rect x="582" y="606" width="1" height="26"/><rect x="707" y="606" width="1" height="26"/><rect x="740" y="606" width="1" height="26"/>
</g>
<path class="c" stroke="#000" d="M77.5 567.5H810.5V595.5H77.5ZM77.5 605.5H810.5V632.5H77.5Z"/>
<g class="c" stroke="#000"><use href="#xt" y="568"/><use href="#xb" y="595"/><use href="#xt" y="606"/><use href="#xb" y="632"/></g>
<!-- colorbars -->
<rect x="824" y="140" width="13" height="111" fill="url(#r)"/>
<rect x="824" y="568" width="13" height="27" fill="url(#r)"/>
<rect x="824" y="606" width="13" height="26" fill="url(#r)"/>
<path class="c" stroke="#000" d="M823.5 139.5H836.5V251.5H823.5ZM823.5 567.5H836.5V595.5H823.5ZM823.5 605.5H836.5V632.5H823.5ZM837 162.5h2M837 184.5h2M837 206.5h2M837 229.5h2"/>
</g>

<!-- Panel 1 labels -->
<g font-size="11">
<text x="54" y="26" textLength="14">10</text><text x="68" y="21" font-size="10">6</text>
<text x="54" y="42" textLength="14">10</text><text x="68" y="37" font-size="10">5</text>
<text x="54" y="60" textLength="14">10</text><text x="68" y="55" font-size="10">4</text>
<text x="54" y="78" textLength="14">10</text><text x="68" y="73" font-size="10">3</text>
<text x="54" y="97" textLength="14">10</text><text x="68" y="92" font-size="10">2</text>
<text x="54" y="115" textLength="14">10</text><text x="68" y="110" font-size="10">1</text>
<text x="54" y="133" textLength="14">10</text><text x="68" y="128" font-size="10">0</text>
<text x="41" y="154" textLength="32">10000</text>
<text x="48" y="197" textLength="25">1000</text>
<text x="57" y="239" textLength="16">100</text>
<text x="67" y="277">8</text><text x="67" y="302">6</text><text x="67" y="327">4</text><text x="67" y="352">2</text><text x="67" y="372">0</text>
<text x="53" y="388" textLength="20">360</text><text x="53" y="414" textLength="20">270</text><text x="53" y="442" textLength="20">180</text><text x="60" y="468" textLength="13">90</text><text x="67" y="492">0</text>
<text x="60" y="510" textLength="13">90</text><text x="67" y="534">0</text><text x="53" y="557" textLength="20">−90</text>
<text x="68" y="574">1</text><text x="67" y="595">0</text><text x="68" y="612">1</text><text x="67" y="632">0</text>
</g>
<!-- Rotated labels -->
<g font-size="12">
<text transform="translate(45 105) rotate(-90)" textLength="60">Count Rate</text>
<text transform="translate(31 226) rotate(-90)" textLength="59">Energy (eV)</text>
<text transform="translate(58 335) rotate(-90)" textLength="38">|B| (nT)</text>
<text transform="translate(44 445) rotate(-90)" textLength="15">Phi</text>
<text transform="translate(43 543) rotate(-90)" textLength="26">Theta</text>
<text transform="translate(58 589) rotate(-90)" textLength="15">Pol</text>
<text transform="translate(58 628) rotate(-90)" textLength="19">Sun</text>
</g>
<!-- legend -->
<g font-size="11">
<text x="821" y="31" style="fill:#ff0000" textLength="31">40 eV</text>
<text x="821" y="53" style="fill:#dcff00" textLength="37">140 eV</text>
<text x="821" y="75" style="fill:#14ff3c" textLength="37">340 eV</text>
<text x="821" y="97" style="fill:#0096ff" textLength="37">800 eV</text>
<text x="821" y="120" style="fill:#8000ff" textLength="44">2950 eV</text>
<text x="840" y="147" textLength="37">6.3×10</text><text x="877" y="141" font-size="10">5</text>
<text x="840" y="251" textLength="37">5.3×10</text><text x="877" y="245" font-size="10">0</text>
<text x="840" y="574">1</text><text x="840" y="595" textLength="13">−1</text>
<text x="840" y="612">3</text><text x="840" y="632">0</text>
</g>
<!-- bottom axis labels -->
<g font-size="11">
<text x="7" y="648" textLength="42">GSE Lon</text>
<text x="7" y="657" textLength="17">doy</text>
<text x="7" y="667" textLength="31">hhmm</text>
<text x="7" y="676" textLength="67">1998 Oct 10</text>
</g>
<g font-size="11" text-anchor="middle">
<text x="77" y="648" textLength="19">238</text><text x="77" y="657" textLength="43">283.000</text><text x="77" y="667" textLength="26">0000</text>
<text x="199" y="648" textLength="19">239</text><text x="199" y="657" textLength="43">283.083</text><text x="199" y="667" textLength="26">0200</text>
<text x="321" y="648" textLength="19">240</text><text x="321" y="657" textLength="43">283.167</text><text x="321" y="667" textLength="26">0400</text>
<text x="443" y="648" textLength="19">241</text><text x="443" y="657" textLength="43">283.250</text><text x="443" y="667" textLength="26">0600</text>
<text x="565" y="648" textLength="19">243</text><text x="565" y="657" textLength="43">283.333</text><text x="565" y="667" textLength="26">0800</text>
<text x="687" y="648" textLength="19">244</text><text x="687" y="657" textLength="43">283.417</text><text x="687" y="667" textLength="26">1000</text>
<text x="809" y="648" textLength="19">245</text><text x="809" y="657" textLength="43">283.500</text><text x="809" y="667" textLength="26">1200</text>
</g>
<text transform="translate(817 632) rotate(-90)" font-size="7" font-weight="bold" textLength="72">Tue Dec 15 10:31:16 1998</text>
</svg>
</body></html>
